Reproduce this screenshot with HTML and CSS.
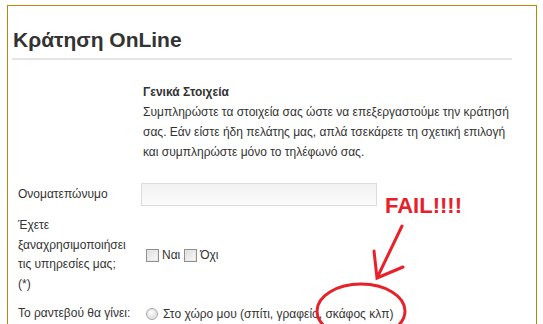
FILE: index.html
```html
<html>
  <head>
    <title>Κράτηση OnLine</title>
    <meta charset="utf-8" />
    <link rel="stylesheet" href="styles.css">
  </head>
  <body>
    <div class="panel">
      <h1>Κράτηση OnLine</h1>

      <div class="intro">
        <strong>Γενικά Στοιχεία</strong>
        <p>Συμπληρώστε τα στοιχεία σας ώστε να επεξεργαστούμε την κράτησή σας. Εάν είστε ήδη πελάτης μας, απλά τσεκάρετε τη σχετική επιλογή και συμπληρώστε μόνο το τηλέφωνό σας.</p>
      </div>

      <div class="row">
        <label for="name">Ονοματεπώνυμο</label>
        <input id="name" type="text" />
      </div>

      <div class="row">
        <label>Έχετε ξαναχρησιμοποιήσει τις υπηρεσίες μας; (*)</label>
        <div class="choices">
          <input id="yes" type="checkbox" /><label for="yes">Ναι</label>
          <input id="no" type="checkbox" /><label for="no">Όχι</label>
        </div>
      </div>

      <div class="row">
        <label class="nowrap">Το ραντεβού θα γίνει:</label>
        <div class="choices">
          <input id="place" type="radio" name="place" /><label for="place">Στο χώρο μου (σπίτι, γραφείο, σκάφος κλπ)</label>
        </div>
      </div>

      <div class="fail">FAIL!!!!</div>
      <svg class="scribble" width="543" height="324" viewBox="0 0 543 324">
        <path d="M402 226 L377 278 M374 251 L377 278 L403 267" />
        <ellipse cx="361" cy="311" rx="44" ry="27" />
      </svg>
    </div>
  </body>
</html>
```

FILE: styles.css
```css
body {
  margin: 0;
  padding: 5px 6px 0 7px;
  background: #fff;
  overflow: hidden;
}

body,
* {
  font-family: "Liberation Sans", Arial, sans-serif;
  font-size: 12px;
  color: #333;
}

.panel {
  border: 1px solid #b8860b;
  border-bottom: none;
  height: 400px;
  padding: 0 24px 0 4px;
}

h1 {
  font-size: 21px;
  font-weight: bold;
  margin: 0;
  padding: 22px 0 6px 1px;
  border-bottom: 2px solid #e4e4e4;
  color: #333;
}

.intro {
  margin: 22px 0 21px 131px;
  line-height: 20px;
}

.intro strong {
  font-weight: bold;
  display: block;
}

.intro p {
  margin: 0;
}

.row {
  display: grid;
  grid-template-columns: 123px 1fr;
  align-items: center;
  margin: 0 0 10px 6px;
}

.row > label {
  line-height: 19.5px;
  padding-right: 11px;
}

.row > label.nowrap {
  white-space: nowrap;
  padding-right: 0;
}

input[type="text"] {
  width: 236px;
  height: 23px;
  box-sizing: border-box;
  border: 1px solid #dcdcdc;
  background: linear-gradient(#f2f2f2, #fbfbfb);
  margin: 0;
}

.choices {
  display: flex;
  align-items: center;
}

.choices input {
  appearance: none;
  width: 13px;
  height: 13px;
  margin: 0 3px 0 5px;
  border: 1px solid #8f8f8f;
  background: linear-gradient(135deg, #dcdcdc, #fbfbfb);
  box-shadow: inset 0 0 0 1px #e8e8e8;
}

.choices input + label + input {
  margin-left: 4px;
}

.choices input[type="radio"] {
  width: 12px;
  height: 12px;
  border-radius: 50%;
  border-color: #a8a8a8;
  margin-left: 5px;
  margin-right: 5px;
  background: radial-gradient(circle at 40% 35%, #fff, #cfcfcf);
}

.fail {
  position: absolute;
  left: 385px;
  top: 193px;
  font-size: 22px;
  font-weight: bold;
  color: #e8202a;
}

.scribble {
  position: absolute;
  left: 0;
  top: 0;
}

.scribble path,
.scribble ellipse {
  fill: none;
  stroke: #e8202a;
  stroke-width: 3;
  stroke-linecap: round;
}
```
